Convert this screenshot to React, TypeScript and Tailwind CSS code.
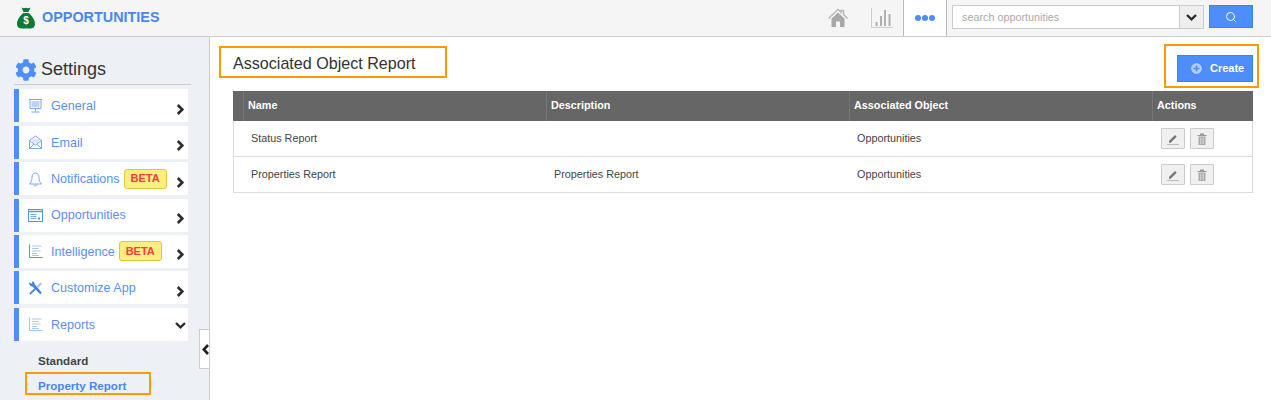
import React from "react";
import { FaCog, FaPlusCircle } from "react-icons/fa";
import { Search } from "lucide-react";

const blue = "#7ba6f8";

const Svg = ({ children, off = "" }: { children: React.ReactNode; off?: string }) => (
  <svg width="15" height="15" viewBox="0 0 15 15" fill="none" stroke={blue} strokeWidth="1" className={off}>
    {children}
  </svg>
);

const GeneralIcon = () => (
  <Svg off="mt-[-1px]">
    <path d="M1 1.500h13M2 1.500v9h11v-9" />
    <path d="M3.500 4h8M3.500 6h8M3.500 8h8" />
    <path d="M7.500 10.500v3M3.500 14h8" />
  </Svg>
);
const EmailIcon = () => (
  <Svg off="mt-[1px]">
    <path d="M1.500 5.500 7.500 1l6 4.500v8h-12z" />
    <path d="M1.500 5.500 7.500 10l6-4.500M1.500 13.500l4.500-4.500M13.500 13.500 9 9" />
    <path d="M4 5h7M4.500 7h6" stroke="#b9d0fb" />
  </Svg>
);
const BellIcon = () => (
  <Svg off="mt-[1px]">
    <path d="M7.500 1C5 1 4 3 4 5.500c0 3-1 5-2.500 6.500h12C12 10.500 11 8.500 11 5.500 11 3 10 1 7.500 1z" />
    <path d="M6 12.500c0 2 3 2 3 0" />
  </Svg>
);
const OppIcon = () => (
  <Svg off="mt-[1px]">
    <rect x="0.500" y="1.500" width="14" height="12" stroke="#5a90f7" />
    <path d="M1 3.500h13" stroke="#5a90f7" strokeWidth="1.500" />
    <path d="M2.500 6.500h6M2.500 8.500h6M2.500 10.500h6" strokeWidth="1" stroke="#7ba6f8" />
    <path d="M10 9.500h2v2h-2z" fill="#5a90f7" stroke="none" />
  </Svg>
);
const ReportIcon = ({ dark }: { dark?: boolean }) => (
  <Svg off="mt-[1px]">
    <path d="M1.500 0.500v13h13" stroke={dark ? "#5a90f7" : "#a9c6fb"} />
    <path d="M4 2h9.500M4 4.500h6.500M4 7h8.500M4 9.500h5M4 11.500h7" stroke="#a9c6fb" strokeWidth="1.200" />
  </Svg>
);
const ToolsIcon = () => (
  <svg width="15" height="15" viewBox="0 0 15 15" fill="none" className="mt-[1px]">
    <path d="M1.500 1 3.300 2.800l1.200-.6L3.700.5C5.500 0 6.800 1.200 6.500 3l7.300 8.700-1.500 1.600L4.200 5.200C2.200 5.800.8 3.800 1.500 1z" fill="#3f7fe8" />
    <path d="M1.200 12.500 6.500 7.200l1.200 1.200-5.300 5.300z" fill="#3f7fe8" />
    <path d="M8.500 5.500 12.500 1.500 14 3l-4 4z" fill="#a5c3fa" />
  </svg>
);

const ChevronRight = () => (
  <svg width="9" height="11" viewBox="0 0 9 11" fill="none" stroke="#2c2c2c" strokeWidth="2.600">
    <path d="M1.800 1 6.300 5.500 1.800 10" />
  </svg>
);
const ChevronDown = ({ size = 11 }: { size?: number }) => (
  <svg width={size} height="7" viewBox="0 0 11 7" fill="none" stroke="#2c2c2c" strokeWidth="2.400">
    <path d="M1 1 5.500 5.300 10 1" />
  </svg>
);

const Beta = () => (
  <span className="flex h-[20px] w-[43px] items-center justify-center rounded-[3px] border border-[#e0c838] bg-[#fdee80] text-[11px] font-bold text-[#f23f3f]">
    BETA
  </span>
);

const items: { label: string; icon: React.ReactNode; beta?: boolean; open?: boolean }[] = [
  { label: "General", icon: <GeneralIcon /> },
  { label: "Email", icon: <EmailIcon /> },
  { label: "Notifications", icon: <BellIcon />, beta: true },
  { label: "Opportunities", icon: <OppIcon /> },
  { label: "Intelligence", icon: <ReportIcon dark />, beta: true },
  { label: "Customize App", icon: <ToolsIcon /> },
  { label: "Reports", icon: <ReportIcon />, open: true },
];

const NavItem = ({ label, icon, beta, open }: (typeof items)[number]) => (
  <div className="flex h-[33px] w-[174px] items-center border-l-[5px] border-[#4d8dfc] bg-white pl-[9px]">
    <span className="flex w-[23px] shrink-0">{icon}</span>
    <span className="mt-[1.600px] text-[12.600px] text-[#5a90f7]">{label}</span>
    {beta && (
      <span className="ml-[4px]">
        <Beta />
      </span>
    )}
    <span className={`ml-auto mr-[2px] flex w-[11px] justify-center ${open ? "mt-[3px]" : "mt-[7px]"}`}>
      {open ? <ChevronDown /> : <ChevronRight />}
    </span>
  </div>
);

const Pencil = () => (
  <svg width="14" height="14" viewBox="0 0 14 14">
    <path d="M3 9 9 3l1.700 1.700L4.700 10.700H3z" fill="#777" />
    <path d="M1 12.500h12" stroke="#bbb" strokeWidth="1" />
  </svg>
);
const Trash = () => (
  <svg width="14" height="14" viewBox="0 0 14 14">
    <path d="M2.500 3h9v1h-9zM5 1.500h4V3H5z" fill="#999" />
    <path d="M3.500 4.500h7V13h-7z" fill="#aaa" />
    <path d="M5.500 5.500v6.500M7 5.500v6.500M8.500 5.500v6.500" stroke="#ddd" strokeWidth="0.700" />
  </svg>
);

const IconBtn = ({ children }: { children: React.ReactNode }) => (
  <span className="flex h-[21px] w-[24px] items-center justify-center rounded-[1px] border border-[#ccc] bg-[#f0f0f0]">
    {children}
  </span>
);

const cols = "grid grid-cols-[11px_303px_303px_303px_1fr]";

const Row = ({ name, desc, obj }: { name: string; desc?: string; obj: string }) => (
  <div className={`${cols} h-[36px] items-center border-b border-[#ddd] text-[10.800px] text-[#444]`}>
    <span />
    <span className="pl-[6px]">{name}</span>
    <span className="pl-[6px]">{desc}</span>
    <span className="pl-[6px]">{obj}</span>
    <span className="flex gap-[5px] pl-[7px]">
      <IconBtn>
        <Pencil />
      </IconBtn>
      <IconBtn>
        <Trash />
      </IconBtn>
    </span>
  </div>
);

export default function App() {
  return (
    <div className="flex h-[400px] w-[1271px] flex-col overflow-hidden bg-white font-['Liberation_Sans',sans-serif]">
      <header className="flex h-[37px] shrink-0 items-stretch border-b border-[#ccc] bg-[#f5f5f5]">
        <div className="flex items-center pl-[17px]">
          <svg width="18" height="22" viewBox="0 0 18 22">
            <path d="M4.500 0.500c1.500 1 3 1 4.500.3 1.500.7 3 .5 4.500-.3L11.500 5h-5zM6.500 6h5C15 8.500 18 13 18 17c0 3-2 4.500-5 4.500H5C2 21.500 0 20 0 17c0-4 3-8.500 6.500-11z" fill="#0a7a3a" />
            <text x="9" y="17" fontSize="10" fontWeight="700" fill="#ffffff" textAnchor="middle" fontFamily="Liberation Sans">$</text>
          </svg>
          <span className="mb-[1px] ml-[7px] text-[14.400px] font-bold text-[#4a86f0]">OPPORTUNITIES</span>
        </div>
        <div className="ml-auto flex items-stretch">
          <span className="flex w-[46px] items-center justify-center">
            <svg width="20" height="20" viewBox="0 0 20 20">
              <path d="M3.500 10.500 10 4.500l6.500 6v8.500h-4.500v-5.500H8V19H3.500z" fill="#a8a8a8" />
              <path d="M0.500 10.500 10 1.500l3 2.800V2.500h2.500v4l4 4" fill="none" stroke="#b8b8b8" strokeWidth="1.500" />
            </svg>
          </span>
          <span className="flex w-[42px] items-center justify-center">
            <svg width="22" height="20" viewBox="0 0 22 20" fill="none">
              <path d="M.5 0v19.500H22" stroke="#ccc" />
              <path d="M5.500 18v-4M10 18V8M14 18V2M18.500 18V6" stroke="#b0b0b0" strokeWidth="2" />
            </svg>
          </span>
          <span className="flex w-[44px] items-center justify-center gap-[1.500px] border-x border-[#bbb] bg-white">
            <i className="h-[5.500px] w-[5.500px] rounded-full bg-[#4d8dfc]" />
            <i className="h-[5.500px] w-[5.500px] rounded-full bg-[#4d8dfc]" />
            <i className="h-[5.500px] w-[5.500px] rounded-full bg-[#4d8dfc]" />
          </span>
          <div className="ml-[5px] mr-[18px] flex items-start pt-[5px]">
            <div className="flex h-[24px] w-[252px] border border-[#ccc] bg-white">
              <span className="flex-1 pl-[9px] text-[10.800px] leading-[22px] text-[#aaa]">search opportunities</span>
              <span className="flex w-[24px] items-center justify-center border-l border-[#ccc] bg-[#eee]">
                <ChevronDown />
              </span>
            </div>
            <span className="ml-[5px] flex h-[23px] w-[44px] items-center justify-center border border-[#3f7fe8] bg-[#4d8dfc]">
              <Search size={12} color="#fff" />
            </span>
          </div>
        </div>
      </header>
      <div className="flex flex-1">
        <aside className="relative w-[210px] shrink-0 border-r border-[#ccc] bg-[#edf0f5] pl-[14px]">
          <div className="mt-[20px] flex h-[28px] w-[177px] items-center border-b border-[#ccc] pb-[3px]">
            <FaCog size={22} color="#4d8dfc" className="ml-[1px] mt-[2px]" />
            <span className="ml-[4px] text-[18px] text-[#333]">Settings</span>
          </div>
          <div className="mt-[4.400px] flex flex-col gap-[3.400px]">
            {items.map((it) => (
              <NavItem key={it.label} {...it} />
            ))}
          </div>
          <div className="mt-[13px] pl-[24px] text-[11.600px] font-bold leading-[14px] text-[#444]">Standard</div>
          <div className="ml-[11px] mt-[4px] h-[23px] w-[126px] border-2 border-[#f90] pl-[11px] text-[11.600px] font-bold leading-[23px] text-[#4a86f0]">
            Property Report
          </div>
          <span className="absolute right-0 top-[292px] flex h-[40px] w-[10px] items-center justify-end overflow-hidden border border-r-0 border-[#ccc] bg-white">
            <svg width="7" height="11" viewBox="0 0 7 11" fill="none" stroke="#222" strokeWidth="2.600">
              <path d="M6 1 1.800 5.500 6 10" />
            </svg>
          </span>
        </aside>
        <main className="min-w-0 flex-1 pl-[9px] pr-[18px]">
          <div className="flex items-start justify-between">
            <div className="mt-[9px] flex h-[32px] w-[228px] items-center border-2 border-[#f90] pl-[12px] pt-[2px] text-[16.100px] text-[#333]">
              Associated Object Report
            </div>
            <div className="mb-[1px] mr-[-6px] mt-[7px] flex h-[44px] w-[95px] items-start justify-end border-2 border-[#f90] pr-[4px] pt-[9px]">
              <span className="flex h-[27px] w-[76px] items-center border border-[#3f7fe8] bg-[#4d8dfc] pl-[13px] text-[11px] font-bold text-white">
                <FaPlusCircle size={11} color="#b4cdfa" />
                <span className="ml-[8px]">Create</span>
              </span>
            </div>
          </div>
          <div className="ml-[14px] mt-[2px] w-[1020px] border-x border-[#ddd]">
            <div className={`${cols} mx-[-1px] h-[30px] items-center bg-[#666] text-[10.800px] font-bold text-white`}>
              <span className="h-full border-r border-[#777]" />
              <span className="flex h-full items-center border-r border-[#777] pb-[2px] pl-[4px]">Name</span>
              <span className="flex h-full items-center border-r border-[#777] pb-[2px] pl-[4px]">Description</span>
              <span className="flex h-full items-center border-r border-[#777] pb-[2px] pl-[4px]">Associated Object</span>
              <span className="flex h-full items-center pb-[2px] pl-[4px]">Actions</span>
            </div>
            <Row name="Status Report" obj="Opportunities" />
            <Row name="Properties Report" desc="Properties Report" obj="Opportunities" />
          </div>
        </main>
      </div>
    </div>
  );
}
